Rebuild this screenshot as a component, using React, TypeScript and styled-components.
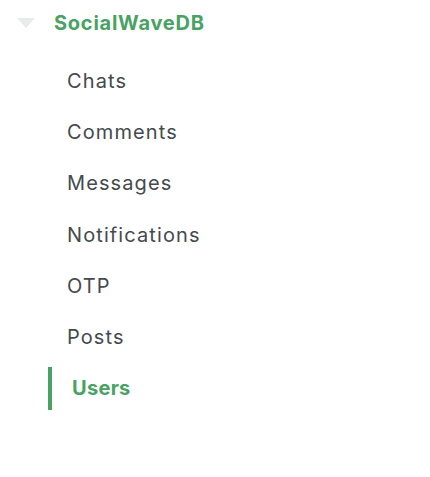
import React from "react";
import styled, { createGlobalStyle, css } from "styled-components";

const GlobalStyle = createGlobalStyle`
  html, body {
    margin: 0;
    padding: 0;
    background: #FFFFFF;
  }
`;

const Tree = styled.div`
  width: 430px;
  height: 477px;
  padding-top: 7px;
  box-sizing: border-box;
  font-family: 'Inter', 'Liberation Sans', sans-serif;
`;

const DbRow = styled.div`
  display: flex;
  flex-direction: row;
  align-items: center;
  height: 32px;
  padding-left: 17px;
`;

const Caret = styled.div`
  width: 0;
  height: 0;
  border-left: 9px solid transparent;
  border-right: 9px solid transparent;
  border-top: 10px solid #E8EAEB;
  margin-right: 19px;
`;

const DbName = styled.div`
  font-weight: 700;
  font-size: 20px;
  color: #47A263;
  letter-spacing: 0.75px;
`;

const List = styled.div`
  display: flex;
  flex-direction: column;
  margin-top: 16px;
`;

const Item = styled.div<{ active?: boolean; }>`
  display: flex;
  align-items: center;
  height: 51.3px;
  margin-left: 48px;
  padding-left: 15px;
  border-left: 4px solid transparent;
  font-size: 20px;
  font-weight: 400;
  letter-spacing: 1.1px;
  color: #444A4D;

  ${props => props.active && css`
    border-left-color: #47A263;
    height: 43px;
    margin-top: 4px;
    padding-left: 20px;
    font-weight: 700;
    letter-spacing: 0.3px;
    color: #47A263;
  `}
`;

const collections = ["Chats", "Comments", "Messages", "Notifications", "OTP", "Posts", "Users"];

const App: React.FC = () => (
  <React.Fragment>
    <GlobalStyle />
    <Tree>
      <DbRow>
        <Caret />
        <DbName>SocialWaveDB</DbName>
      </DbRow>
      <List>
        {collections.map(name => (
          <Item key={name} active={name === "Users"}>{name}</Item>
        ))}
      </List>
    </Tree>
  </React.Fragment>
);

export default App;
